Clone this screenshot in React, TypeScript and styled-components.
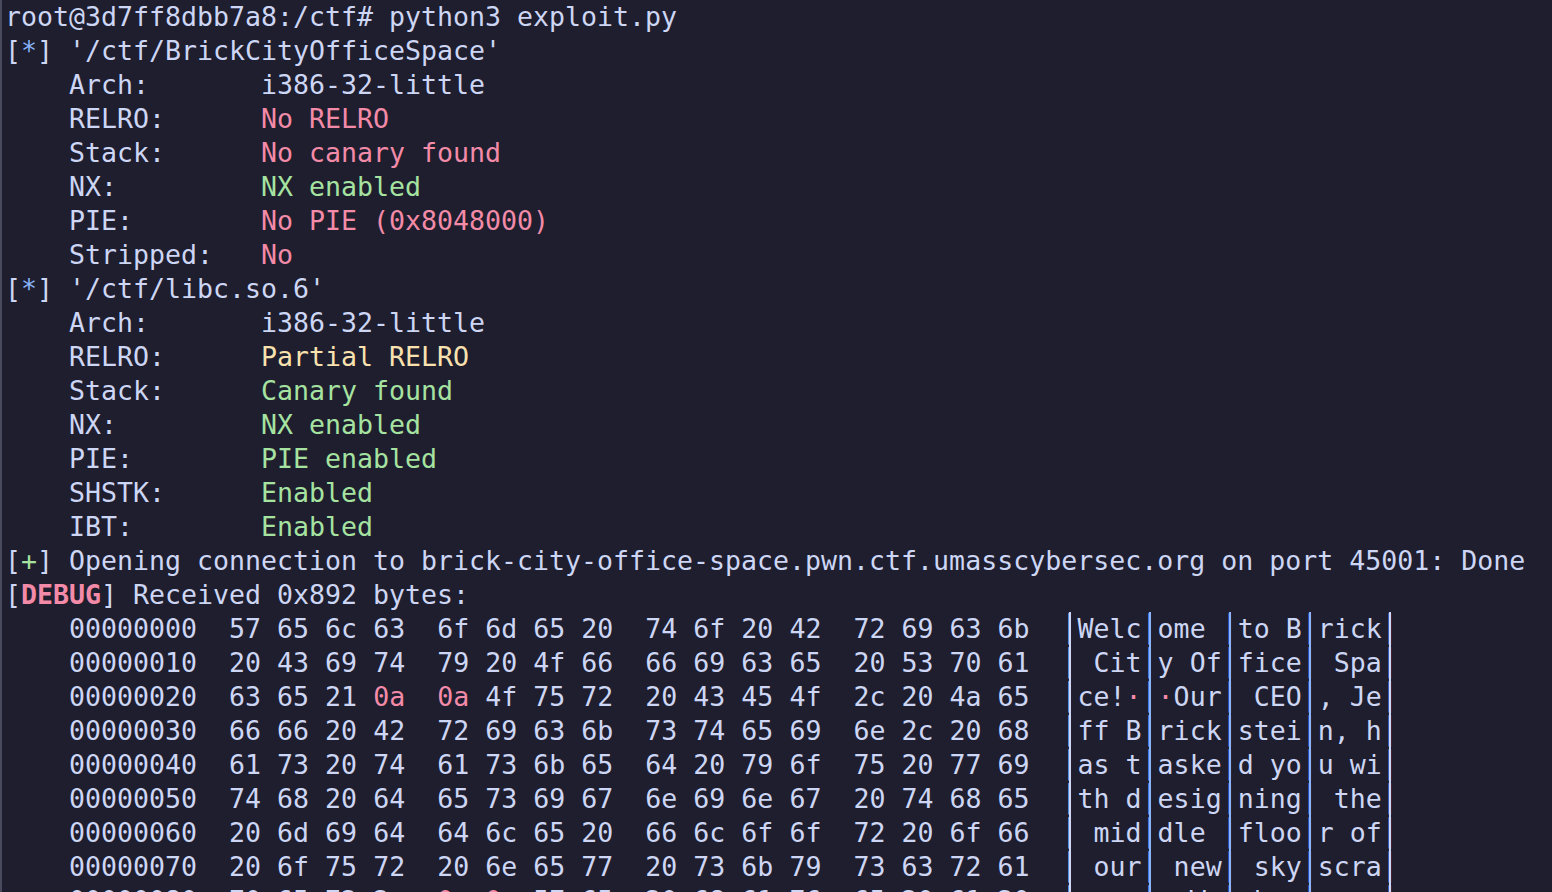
import React from "react";
import styled, { createGlobalStyle } from "styled-components";

const FG = "#cdd6f4";
const RED = "#f38ba8";
const GREEN = "#a6e3a1";
const YELLOW = "#f9e2af";
const BLUE = "#89b4fa";

const Global = createGlobalStyle`
  html, body {
    margin: 0;
    padding: 0;
    background: #1e1e2e;
    height: 892px;
    overflow: hidden;
  }
`;

const Terminal = styled.div`
  box-sizing: border-box;
  width: 1552px;
  height: 892px;
  overflow: hidden;
  background: #1e1e2e;
  border-left: 2px solid #4a4b5c;
  padding: 0 0 0 3px;
  font-family: "DejaVu Sans Mono", "Liberation Mono", monospace;
  font-size: 26.58px;
  color: ${FG};
`;

const Line = styled.div`
  height: 34px;
  line-height: 34px;
  white-space: pre;
`;

const C = styled.span<{ $c: string; $b?: boolean }>`
  color: ${(p) => p.$c};
  font-weight: ${(p) => (p.$b ? 700 : 400)};
`;

const Bar = styled.span<{ $c: string }>`
  display: inline-block;
  width: 16px;
  height: 34px;
  vertical-align: top;
  text-align: center;
  color: ${(p) => p.$c};
  background: linear-gradient(${(p) => p.$c}, ${(p) => p.$c}) no-repeat 7px 0 / 2px 100%;
`;

const Field: React.FC<{ name: string; value: string; color?: string }> = ({ name, value, color }) => (
  <Line>
    {("    " + name + ":").padEnd(16, " ")}
    {color ? <C $c={color}>{value}</C> : value}
  </Line>
);

const Tag: React.FC<{ mark: string; color: string; bold?: boolean; children: React.ReactNode }> = ({
  mark,
  color,
  bold,
  children,
}) => (
  <Line>
    [<C $c={color} $b={bold}>{mark}</C>]{children}
  </Line>
);

const message =
  "Welcome to Brick City Office Space!\n\nOur CEO, Jeff Brickstein, has tasked you with designing the middle floor of our new skyscraper.\n\nWe have a ";

const hex = (n: number) => n.toString(16).padStart(2, "0");

const HexRow: React.FC<{ offset: number }> = ({ offset }) => {
  const bytes = Array.from(message.slice(offset, offset + 16)).map((ch) => ch.charCodeAt(0));
  const groups = [0, 1, 2, 3].map((g) => bytes.slice(g * 4, g * 4 + 4));
  const barColors = [FG, BLUE, BLUE, BLUE, FG];
  return (
    <Line>
      {"    " + offset.toString(16).padStart(8, "0") + "  "}
      {groups.map((grp, gi) => (
        <React.Fragment key={gi}>
          {grp.map((b, bi) => (
            <React.Fragment key={bi}>
              {b === 10 ? <C $c={RED}>{hex(b)}</C> : hex(b)}
              {bi < 3 ? " " : "  "}
            </React.Fragment>
          ))}
        </React.Fragment>
      ))}
      <Bar $c={barColors[0]}>│</Bar>
      {groups.map((grp, gi) => (
        <React.Fragment key={gi}>
          {grp.map((b, bi) =>
            b === 10 ? (
              <C key={bi} $c={RED}>
                ·
              </C>
            ) : (
              <React.Fragment key={bi}>{String.fromCharCode(b)}</React.Fragment>
            )
          )}
          <Bar $c={barColors[gi + 1]}>│</Bar>
        </React.Fragment>
      ))}
    </Line>
  );
};

export default function App() {
  return (
    <>
      <Global />
      <Terminal>
        <Line>root@3d7ff8dbb7a8:/ctf# python3 exploit.py</Line>
        <Tag mark="*" color={BLUE}>
          {" '/ctf/BrickCityOfficeSpace'"}
        </Tag>
        <Field name="Arch" value="i386-32-little" />
        <Field name="RELRO" value="No RELRO" color={RED} />
        <Field name="Stack" value="No canary found" color={RED} />
        <Field name="NX" value="NX enabled" color={GREEN} />
        <Field name="PIE" value="No PIE (0x8048000)" color={RED} />
        <Field name="Stripped" value="No" color={RED} />
        <Tag mark="*" color={BLUE}>
          {" '/ctf/libc.so.6'"}
        </Tag>
        <Field name="Arch" value="i386-32-little" />
        <Field name="RELRO" value="Partial RELRO" color={YELLOW} />
        <Field name="Stack" value="Canary found" color={GREEN} />
        <Field name="NX" value="NX enabled" color={GREEN} />
        <Field name="PIE" value="PIE enabled" color={GREEN} />
        <Field name="SHSTK" value="Enabled" color={GREEN} />
        <Field name="IBT" value="Enabled" color={GREEN} />
        <Tag mark="+" color={GREEN}>
          {" Opening connection to brick-city-office-space.pwn.ctf.umasscybersec.org on port 45001: Done"}
        </Tag>
        <Tag mark="DEBUG" color={RED} bold>
          {" Received 0x892 bytes:"}
        </Tag>
        {[0, 16, 32, 48, 64, 80, 96, 112, 128].map((o) => (
          <HexRow key={o} offset={o} />
        ))}
      </Terminal>
    </>
  );
}
